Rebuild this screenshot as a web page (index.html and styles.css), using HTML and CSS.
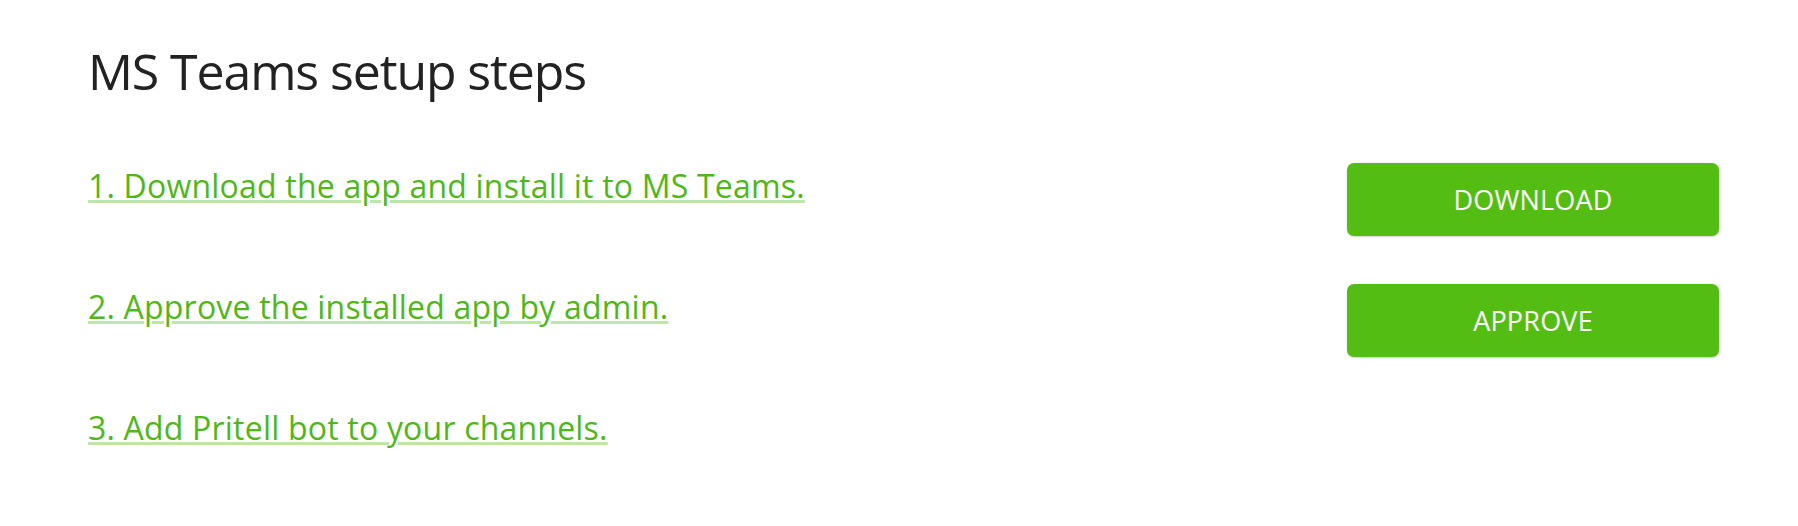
FILE: index.html
```html
<!DOCTYPE html>
<html lang="en">
<head>
<meta charset="utf-8">
<title>MS Teams setup steps</title>
<link rel="stylesheet" href="styles.css">
</head>
<body>
<main class="page">
  <h1 class="title">MS Teams setup steps</h1>
  <div class="steps">
    <div class="step">
      <a class="step-link" href="#">1. Download the app and install it to MS Teams.</a>
      <button class="btn" type="button">DOWNLOAD</button>
    </div>
    <div class="step">
      <a class="step-link" href="#">2. Approve the installed app by admin.</a>
      <button class="btn" type="button">APPROVE</button>
    </div>
    <div class="step">
      <a class="step-link" href="#">3. Add Pritell bot to your channels.</a>
    </div>
  </div>
</main>
</body>
</html>
```

FILE: styles.css
```css
html, body {
  margin: 0;
  padding: 0;
  background: #ffffff;
}

body {
  font-family: "Open Sans", "Liberation Sans", sans-serif;
}

.page {
  padding: 41px 79px 0 88px;
}

.title {
  margin: 0 0 62px 0;
  font-size: 50px;
  line-height: 60px;
  font-weight: 400;
  letter-spacing: -1.1px;
  color: #222222;
}

.steps {
  display: flex;
  flex-direction: column;
}

.step {
  display: flex;
  justify-content: space-between;
  align-items: flex-start;
  height: 121px;
}

.step-link {
  display: block;
  margin-top: 3px;
  font-size: 32px;
  line-height: 40px;
  font-weight: 400;
  letter-spacing: 0.2px;
  color: #4fb717;
  text-decoration: underline;
  text-decoration-color: #bde6a8;
  text-decoration-thickness: 3px;
  text-underline-offset: 2px;
  text-decoration-skip-ink: auto;
}

.btn {
  width: 372px;
  height: 73px;
  border: none;
  border-radius: 7px;
  background: #54bd14;
  color: #ffffff;
  font-family: "Open Sans", "Liberation Sans", sans-serif;
  font-size: 27px;
  font-weight: 400;
  letter-spacing: 0.2px;
  box-shadow: 0 1px 2px rgba(0, 0, 0, 0.18);
  cursor: pointer;
}
```
